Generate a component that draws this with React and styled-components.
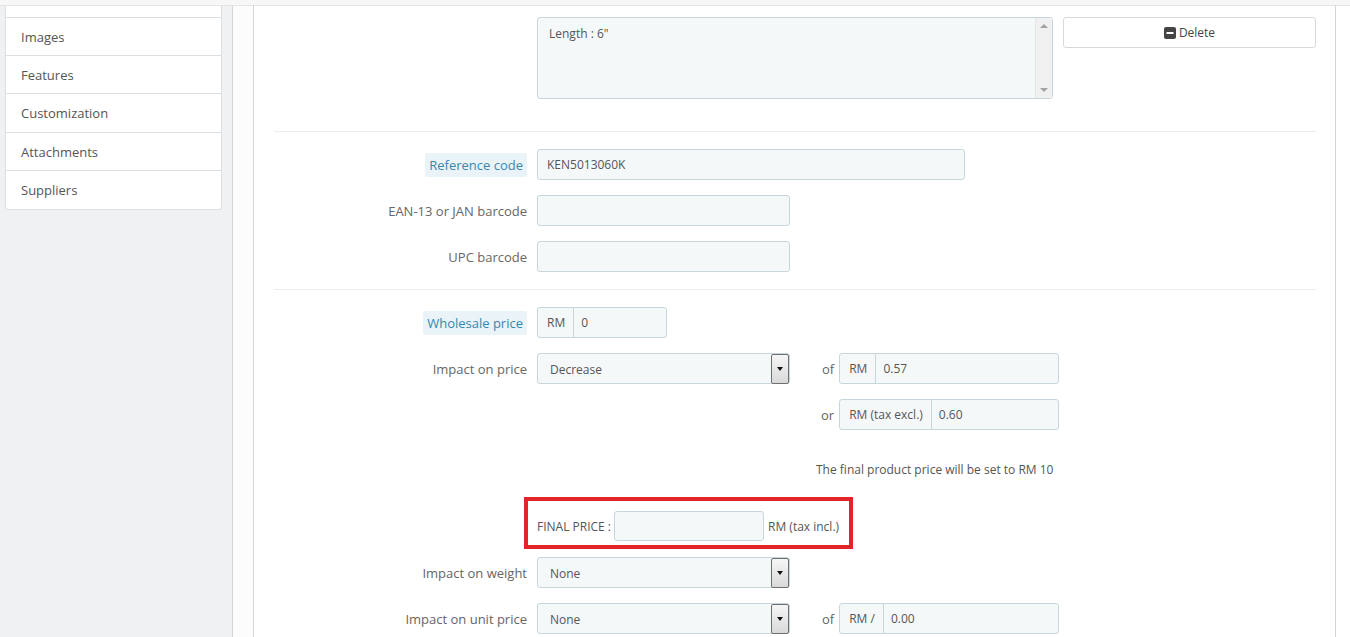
import React from 'react'
import styled, { createGlobalStyle } from 'styled-components'

const GlobalStyle = createGlobalStyle`
  html, body {
    margin: 0;
    padding: 0;
    background: #eff1f2;
    font-family: 'Open Sans', 'Liberation Sans', sans-serif;
    color: #555;
  }
  * { box-sizing: border-box; }
`

const Page = styled.div`
  width: 1350px;
  height: 637px;
  overflow: hidden;
  border-top: 5px solid #f7f7f7;
  display: grid;
  grid-template-columns: 232px 21px 1083px 14px;
`

const SideColumn = styled.div`
  border-top: 1px solid #e2e4e6;
  padding-left: 5px;
`

const SideList = styled.ul`
  list-style: none;
  margin: 0;
  padding: 0;
  width: 217px;
  background: #fff;
  border: 1px solid #dcdfe1;
  border-top: none;
  border-radius: 0 0 3px 3px;
`

const SideItem = styled.li`
  height: ${({ short }) => (short ? '12px' : '38px')};
  line-height: 38px;
  padding-left: 15px;
  font-size: 13px;
  color: #555;
  border-bottom: 1px solid #dcdfe1;
  &:nth-child(4) { height: 39px; }
  &:last-child { border-bottom: none; }
`

const Gutter = styled.div`
  background: #fcfcfc;
  border-top: 1px solid #e2e4e6;
  border-left: 1px solid #d3d6d8;
`

const Panel = styled.div`
  background: #fff;
  border-top: 1px solid #e2e4e6;
  border-left: 1px solid #d3d6d8;
  border-right: 1px solid #d3d6d8;
  padding: 11px 19px 0 20px;
  display: flex;
  flex-direction: column;
`

const Edge = styled.div`
  background: #fff;
  border-top: 1px solid #e2e4e6;
`

const Row = styled.div`
  display: flex;
  align-items: center;
  margin-top: ${({ mt }) => (mt || 0)}px;
`

const Label = styled.div`
  width: 253px;
  flex: none;
  margin-right: 10px;
  text-align: right;
  font-size: 13px;
  color: #666;
`

const Hint = styled.span`
  background: #e9f3f8;
  color: #3a87ad;
  padding: 3px 4px;
  border-radius: 2px;
`

const Separator = styled.hr`
  border: none;
  border-top: 1px solid #eaedef;
  margin: ${({ my }) => my};
`

const Field = styled.div`
  width: ${({ w }) => w}px;
  height: 31px;
  background: #f5f8f9;
  border: 1px solid #c7d6db;
  border-radius: 3px;
  font-size: 12px;
  color: #555;
  line-height: 29px;
  padding: 0 9px;
`

const TextArea = styled.div`
  width: 516px;
  height: 82px;
  background: #f5f8f9;
  border: 1px solid #c7d6db;
  border-radius: 3px;
  font-size: 12px;
  color: #555;
  display: flex;
`

const AreaText = styled.div`
  flex: 1;
  padding: 7px 11px;
`

const ScrollBar = styled.div`
  width: 17px;
  background: #f0f0f0;
  border-left: 1px solid #e6e6e6;
  display: flex;
  flex-direction: column;
  justify-content: space-between;
  align-items: center;
  padding: 6px 0;
`

const Tri = styled.span`
  width: 0;
  height: 0;
  border-left: 4px solid transparent;
  border-right: 4px solid transparent;
  ${({ down }) =>
    down ? 'border-top: 4px solid #a3a3a3;' : 'border-bottom: 4px solid #a3a3a3;'}
`

const Button = styled.div`
  width: 253px;
  height: 31px;
  margin-left: 10px;
  align-self: flex-start;
  border: 1px solid #d6dadc;
  border-radius: 3px;
  background: #fff;
  display: flex;
  align-items: center;
  justify-content: center;
  gap: 3px;
  font-size: 12px;
  color: #444;
`

const Select = styled.div`
  width: 253px;
  height: 31px;
  background: #f5f8f9;
  border: 1px solid #c7d6db;
  border-radius: 3px;
  display: flex;
  font-size: 12px;
  color: #555;
`

const SelectValue = styled.div`
  flex: 1;
  line-height: 31px;
  padding-left: 12px;
`

const SelectArrow = styled.div`
  width: 18px;
  margin: 0 0 -1px;
  border: 1px solid #6f6f6f;
  border-radius: 2px;
  background: linear-gradient(#f6f6f6, #d9d9d9);
  display: flex;
  align-items: center;
  justify-content: center;
  &::after {
    content: '';
    border-left: 3px solid transparent;
    border-right: 3px solid transparent;
    border-top: 4px solid #111;
  }
`

const Group = styled.div`
  width: ${({ w }) => w}px;
  height: 31px;
  display: flex;
  background: #f5f8f9;
  border: 1px solid #c7d6db;
  border-radius: 3px;
  font-size: 12px;
  color: #555;
  line-height: 29px;
`

const Addon = styled.div`
  padding: 0 8px 0 9px;
  border-right: 1px solid #c7d6db;
`

const GroupValue = styled.div`
  padding-left: 7px;
`

const Conj = styled.span`
  font-size: 13px;
  color: #666;
  margin: 0 5px 0 ${({ ml }) => ml}px;
`

const Note = styled.div`
  font-size: 12px;
  color: #555;
  margin-left: 542px;
`

const Highlight = styled.div`
  margin-left: 250px;
  width: 329px;
  height: 52px;
  border: 4px solid #e3242b;
  display: flex;
  align-items: center;
  padding: 6px 0 0 9px;
  font-size: 12px;
  color: #555;
`

const FinalInput = styled.div`
  width: 150px;
  height: 30px;
  margin: 0 4px 0 3px;
  background: #f5f8f9;
  border: 1px solid #c7d6db;
  border-radius: 3px;
`

const MinusIcon = () => (
  <svg width="12" height="12" viewBox="0 0 12 12">
    <rect x="0" y="0" width="12" height="12" rx="2" fill="#444" />
    <rect x="2.5" y="5" width="7" height="2" fill="#fff" />
  </svg>
)

const sideItems = ['Images', 'Features', 'Customization', 'Attachments', 'Suppliers']

const App = () => (
  <>
    <GlobalStyle />
    <Page>
      <SideColumn>
        <SideList>
          <SideItem short />
          {sideItems.map(item => (
            <SideItem key={item}>{item}</SideItem>
          ))}
        </SideList>
      </SideColumn>
      <Gutter />
      <Panel>
        <Row style={{ alignItems: 'flex-start' }}>
          <Label />
          <TextArea>
            <AreaText>Length : 6"</AreaText>
            <ScrollBar>
              <Tri />
              <Tri down />
            </ScrollBar>
          </TextArea>
          <Button>
            <MinusIcon />
            Delete
          </Button>
        </Row>
        <Separator my="32px 0 17px" />
        <Row>
          <Label><Hint>Reference code</Hint></Label>
          <Field w={428}>KEN5013060K</Field>
        </Row>
        <Row mt={15}>
          <Label>EAN-13 or JAN barcode</Label>
          <Field w={253} />
        </Row>
        <Row mt={15}>
          <Label>UPC barcode</Label>
          <Field w={253} />
        </Row>
        <Separator my="17px 0 17px" />
        <Row>
          <Label><Hint>Wholesale price</Hint></Label>
          <Group w={130}>
            <Addon>RM</Addon>
            <GroupValue>0</GroupValue>
          </Group>
        </Row>
        <Row mt={15}>
          <Label>Impact on price</Label>
          <Select>
            <SelectValue>Decrease</SelectValue>
            <SelectArrow />
          </Select>
          <Conj ml={32}>of</Conj>
          <Group w={220}>
            <Addon>RM</Addon>
            <GroupValue>0.57</GroupValue>
          </Group>
        </Row>
        <Row mt={15}>
          <Label />
          <Conj ml={284}>or</Conj>
          <Group w={220}>
            <Addon>RM (tax excl.)</Addon>
            <GroupValue>0.60</GroupValue>
          </Group>
        </Row>
        <Row mt={31}>
          <Note>The final product price will be set to RM 10</Note>
        </Row>
        <Row mt={19}>
          <Highlight>
            FINAL PRICE :
            <FinalInput />
            RM (tax incl.)
          </Highlight>
        </Row>
        <Row mt={8}>
          <Label>Impact on weight</Label>
          <Select>
            <SelectValue>None</SelectValue>
            <SelectArrow />
          </Select>
        </Row>
        <Row mt={15}>
          <Label>Impact on unit price</Label>
          <Select>
            <SelectValue>None</SelectValue>
            <SelectArrow />
          </Select>
          <Conj ml={32}>of</Conj>
          <Group w={220}>
            <Addon>RM /</Addon>
            <GroupValue>0.00</GroupValue>
          </Group>
        </Row>
      </Panel>
      <Edge />
    </Page>
  </>
)

export default App
